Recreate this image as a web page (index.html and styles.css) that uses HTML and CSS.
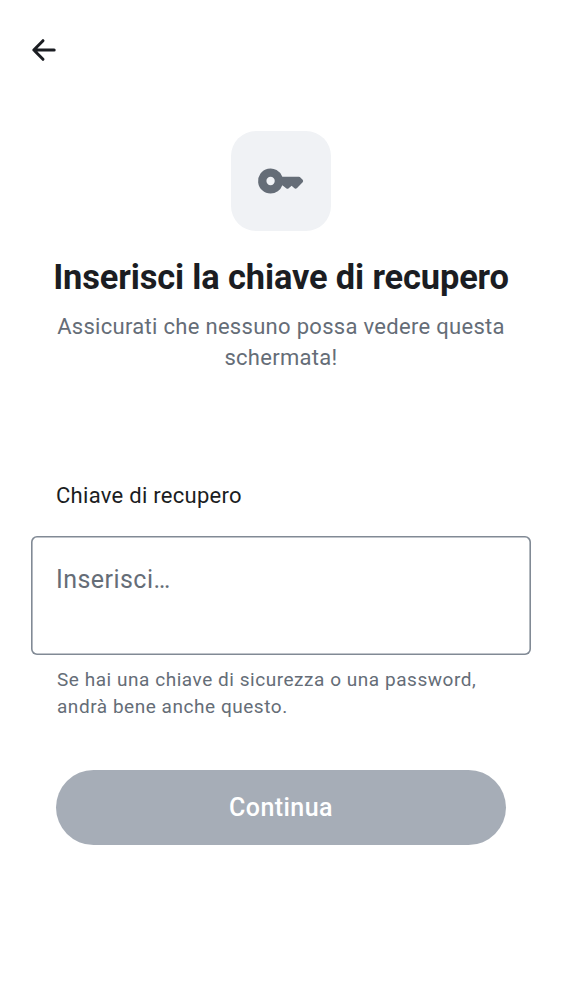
FILE: index.html
```html
<!DOCTYPE html>
<html lang="it">
<head>
<meta charset="utf-8">
<title>Chiave di recupero</title>
<link rel="stylesheet" href="styles.css">
</head>
<body>
<main class="screen">
  <header class="topbar">
    <button class="back" aria-label="Indietro">
      <svg width="26" height="26" viewBox="0 0 26 26"><path d="M24.2 13H4M13 3.7L3.8 13l9.2 9.3" fill="none" stroke="#1b1d22" stroke-width="3" stroke-linecap="round" stroke-linejoin="round"/></svg>
    </button>
  </header>
  <section class="intro">
    <div class="badge">
      <svg width="50" height="50" viewBox="0 0 24 24"><path fill="#656d77" fill-rule="evenodd" d="M7 14a2 2 0 1 1 0-4 2 2 0 0 1 0 4m0 4a6 6 0 1 1 5.65-8H20.6q.4 0 .7.3l1.1 1.1q.5.6 0 1.2l-2.7 2.8q-.7.6-1.4 0l-1.2-1.1-1.4 1.2q-.6.5-1.2 0L12.65 14A6 6 0 0 1 7 18"/></svg>
    </div>
    <h1 class="title">Inserisci la chiave di recupero</h1>
    <p class="subtitle">Assicurati che nessuno possa vedere questa<br>schermata!</p>
  </section>
  <section class="form">
    <label class="label">Chiave di recupero</label>
    <div class="field">Inserisci…</div>
    <p class="hint">Se hai una chiave di sicurezza o una password,<br>andrà bene anche questo.</p>
    <button class="submit">Continua</button>
  </section>
</main>
</body>
</html>
```
FILE: styles.css
```css
* { box-sizing: border-box; }
body { margin: 0; background: #fff; font-family: Roboto, sans-serif; color: #1b1d22; }
.screen { width: 562px; height: 1000px; overflow: hidden; }
.topbar { height: 131px; padding: 37px 0 0 30px; }
.back { display: block; padding: 0; border: 0; background: none; }
.back svg { display: block; }
.intro { display: flex; flex-direction: column; align-items: center; text-align: center; height: 349px; }
.badge { width: 100px; height: 100px; border-radius: 25px; background: #f0f2f5; display: flex; align-items: center; justify-content: center; }
.title { margin: 24px 0 0; font-size: 34.4px; line-height: 44px; font-weight: 700; letter-spacing: -.13px; white-space: nowrap; }
.subtitle { margin: 12px 0 0; font-size: 22px; line-height: 31px; letter-spacing: .3px; color: #656d77; white-space: nowrap; }
.form { display: flex; flex-direction: column; padding: 0 31px; }
.label { padding-left: 25px; font-size: 22px; line-height: 31px; letter-spacing: .28px; }
.field { margin-top: 25px; height: 119px; padding: 28px 25px; box-shadow: inset 0 0 0 1.6px #818a95; border-radius: 6px; font-size: 25px; line-height: 32px; letter-spacing: .45px; color: #656d77; }
.hint { margin: 11px 0 0 26px; font-size: 19px; line-height: 27px; letter-spacing: .54px; color: #656d77; white-space: nowrap; }
.submit { margin: 50px 25px 0; height: 75px; border: 0; border-radius: 38px; background: #a6adb7; color: #fff; font: 500 25px/37px Roboto, sans-serif; letter-spacing: .45px; }
```
